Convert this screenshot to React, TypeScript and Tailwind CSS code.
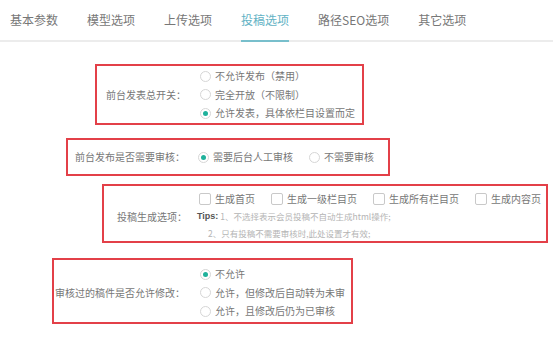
import React from "react";

const tabs = ["基本参数", "模型选项", "上传选项", "投稿选项", "路径SEO选项", "其它选项"];
const active = "投稿选项";

function Radio({ checked }: { checked?: boolean }) {
  return (
    <span className="flex size-[11px] shrink-0 items-center justify-center rounded-full border border-[#d6d6d6] bg-white">
      {checked && <span className="size-[5px] rounded-full bg-[#1fb19b]" />}
    </span>
  );
}

function Check() {
  return <span className="size-[12px] shrink-0 rounded-[2px] border border-[#c9c9c9] bg-white" />;
}

function Option({ label, checked }: { label: string; checked?: boolean }) {
  return (
    <div className="flex h-[18.5px] items-center gap-[4px]">
      <Radio checked={checked} />
      <span>{label}</span>
    </div>
  );
}

export default function App() {
  return (
    <div className="h-[337px] w-[553px] overflow-hidden bg-white font-['Noto_Sans_CJK_SC',sans-serif] text-[10px] leading-[14px] text-[#777]">
      {/* tab strip */}
      <nav className="flex gap-[29px] border-b-2 border-[#ececec] pl-[10px] text-[12px] leading-[16px]">
        {tabs.map((t) => (
          <div
            key={t}
            className={
              t === active
                ? "-mb-[2px] border-b-2 border-[#78bfcc] pt-[12px] pb-[12px] text-[#62b2c4]"
                : "pt-[12px] pb-[12px] text-[#777]"
            }
          >
            {t}
          </div>
        ))}
      </nav>

      {/* 前台发表总开关 */}
      <div className="mt-[22px] ml-[95px] flex h-[61px] w-[269px] items-center border-2 border-[#e34048] pl-[9px]">
        <span className="w-[80px] shrink-0">前台发表总开关：</span>
        <div className="ml-[14px] flex flex-col">
          <Option label="不允许发布（禁用）" />
          <Option label="完全开放（不限制）" />
          <Option label="允许发表，具体依栏目设置而定" checked />
        </div>
      </div>

      {/* 前台发布是否需要审核 */}
      <div className="mt-[13px] ml-[66px] flex h-[38px] w-[324px] items-center border-2 border-[#e34048] pl-[7px]">
        <span className="w-[110px] shrink-0">前台发布是否需要审核：</span>
        <div className="ml-[13px] flex items-center gap-[16px]">
          <div className="flex items-center gap-[4px]">
            <Radio checked />
            <span>需要后台人工审核</span>
          </div>
          <div className="flex items-center gap-[4px]">
            <Radio />
            <span>不需要审核</span>
          </div>
        </div>
      </div>

      {/* 投稿生成选项 */}
      <div className="mt-[8px] ml-[102px] flex h-[59px] w-[446px] items-start border-2 border-[#e34048] pl-[13px] pt-[4px]">
        <span className="mt-[20px] w-[70px] shrink-0 leading-[14px]">投稿生成选项：</span>
        <div className="ml-[10px] flex flex-col">
          <div className="flex h-[17px] items-center gap-[16px] pl-[2px]">
            {["生成首页", "生成一级栏目页", "生成所有栏目页", "生成内容页"].map((l) => (
              <div key={l} className="flex items-center gap-[4px]">
                <Check />
                <span>{l}</span>
              </div>
            ))}
          </div>
          <div className="flex h-[17px] items-center text-[8.5px] text-[#b4b4b4]">
            <span className="mr-[2px] font-['Liberation_Sans',sans-serif] text-[9px] font-bold text-[#555]">Tips:</span>
            <span>1、不选择表示会员投稿不自动生成html操作;</span>
          </div>
          <div className="flex h-[17px] items-center pl-[11px] text-[8.5px] text-[#b4b4b4]">
            2、只有投稿不需要审核时,此处设置才有效;
          </div>
        </div>
      </div>

      {/* 审核过的稿件是否允许修改 */}
      <div className="mt-[15px] ml-[52px] flex h-[66px] w-[301px] items-center border-2 border-[#e34048] pl-[1px] pt-[3px]">
        <span className="w-[130px] shrink-0">审核过的稿件是否允许修改：</span>
        <div className="ml-[15px] flex flex-col">
          <Option label="不允许" checked />
          <Option label="允许，但修改后自动转为未审" />
          <Option label="允许，且修改后仍为已审核" />
        </div>
      </div>
    </div>
  );
}
